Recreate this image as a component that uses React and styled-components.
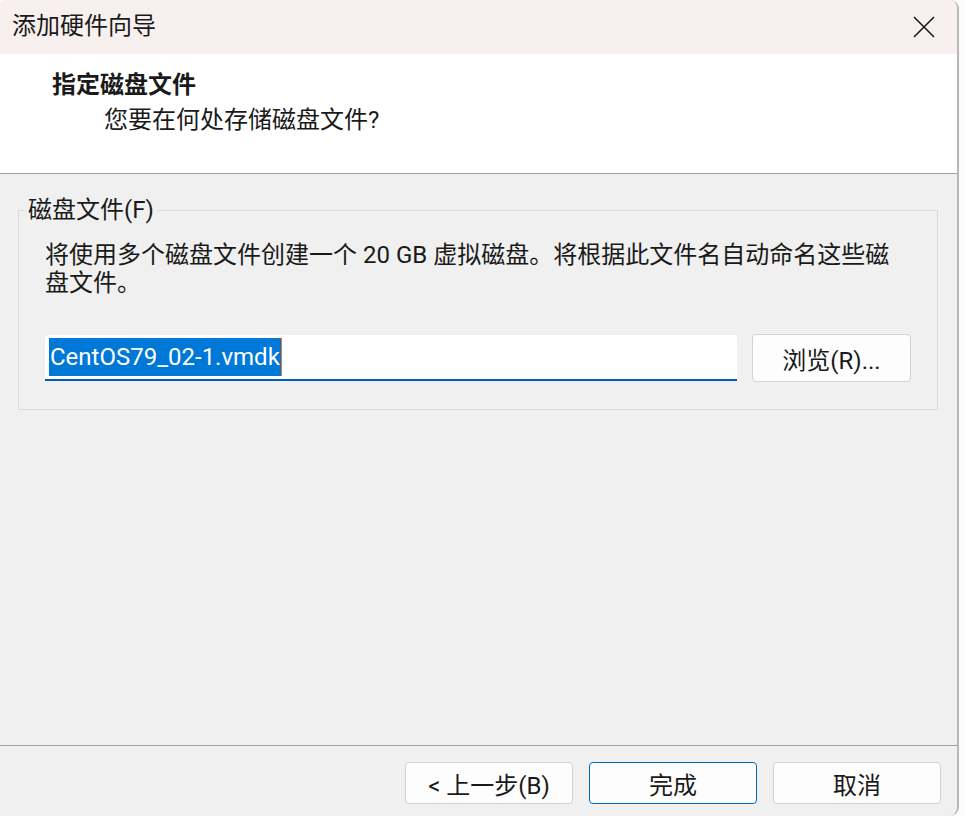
import React from 'react';
import styled, { createGlobalStyle } from 'styled-components';

const GlobalStyle = createGlobalStyle`
  html, body {
    margin: 0;
    padding: 0;
    background: #fbfbfb;
  }
  body {
    font-family: "Segoe UI", Roboto, "Noto Sans CJK SC", sans-serif;
    color: #1a1a1a;
  }
`

const Window = styled.div`
  width: 957px;
  height: 816px;
  display: flex;
  flex-direction: column;
  border-right: 2px solid #b8b8b8;
  border-top-right-radius: 9px;
  border-bottom-right-radius: 9px;
  border-top-left-radius: 6px;
  overflow: hidden;
  background: #f0f0f0;
  font-size: 24px;
`

const TitleBar = styled.div`
  height: 54px;
  flex: none;
  display: flex;
  align-items: center;
  justify-content: space-between;
  padding: 0 22px 0 12px;
  background: #f7f0ee;
`

const Title = styled.div`
  font-size: 24px;
  line-height: 30px;
  margin-top: -2px;
`

const CloseButton = styled.div`
  width: 22px;
  height: 22px;
  display: flex;
  margin-top: -1px;
`

const Header = styled.div`
  flex: none;
  height: 105px;
  padding: 14px 0 0 52px;
  background: #ffffff;
  border-bottom: 1px solid #a0a0a0;
`

const HeaderTitle = styled.div`
  font-weight: 700;
  line-height: 35px;
`

const HeaderSub = styled.div`
  line-height: 35px;
  padding-left: 52px;
`

const Body = styled.div`
  flex: 1;
  padding: 23px 19px 0 18px;
`

const Group = styled.fieldset`
  margin: 0;
  padding: 0 0 27px 6px;
  border: 1px solid #dcdcdc;
  min-width: 0;
`

const Legend = styled.legend`
  padding: 0 3px;
  line-height: 26px;
  font-size: 24px;
`

const Content = styled.div`
  padding-left: 20px;
`

const Description = styled.p`
  margin: 18px 0 0;
  line-height: 28px;
`

const FileRow = styled.div`
  display: flex;
  align-items: center;
  gap: 15px;
  margin-top: 37px;
`

const FileField = styled.div`
  width: 688px;
  height: 44px;
  box-sizing: content-box;
  background: #ffffff;
  border-bottom: 2px solid #005fb8;
  border-radius: 4px 4px 0 0;
  display: flex;
  align-items: center;
  padding-left: 4px;
`

const Selected = styled.span`
  background: #0078d7;
  color: #ffffff;
  line-height: 38px;
  padding: 0 1px 0 1px;
  border-right: 1px solid #e07a2a;
`

const Button = styled.button`
  width: ${(p) => p.width || 168}px;
  height: ${(p) => p.height || 42}px;
  padding: 0;
  font: inherit;
  font-size: 24px;
  color: #1a1a1a;
  background: #fdfdfd;
  border: 1px solid ${(p) => (p.primary ? '#0067c0' : '#d2d2d2')};
  border-radius: 4px;
  display: flex;
  align-items: center;
  justify-content: center;
`

const Footer = styled.div`
  flex: none;
  height: 71px;
  box-sizing: border-box;
  padding: 16px 16px 0 0;
  border-top: 1px solid #a0a0a0;
  display: flex;
  justify-content: flex-end;
  gap: 16px;
`

function App() {
    return (
        <Window>
            <GlobalStyle />
            <TitleBar>
                <Title>添加硬件向导</Title>
                <CloseButton>
                    <svg width="22" height="22" viewBox="0 0 22 22">
                        <path d="M1 1 L21 21 M21 1 L1 21" stroke="#1a1a1a" strokeWidth="1.6" fill="none" />
                    </svg>
                </CloseButton>
            </TitleBar>
            <Header>
                <HeaderTitle>指定磁盘文件</HeaderTitle>
                <HeaderSub>您要在何处存储磁盘文件?</HeaderSub>
            </Header>
            <Body>
                <Group>
                    <Legend>磁盘文件(F)</Legend>
                    <Content>
                        <Description>
                            将使用多个磁盘文件创建一个 20 GB 虚拟磁盘。将根据此文件名自动命名这些磁<br />盘文件。
                        </Description>
                        <FileRow>
                            <FileField>
                                <Selected>CentOS79_02-1.vmdk</Selected>
                            </FileField>
                            <Button width={159} height={48}>浏览(R)...</Button>
                        </FileRow>
                    </Content>
                </Group>
            </Body>
            <Footer>
                <Button>&lt; 上一步(B)</Button>
                <Button primary>完成</Button>
                <Button>取消</Button>
            </Footer>
        </Window>
    );
}

export default App;
